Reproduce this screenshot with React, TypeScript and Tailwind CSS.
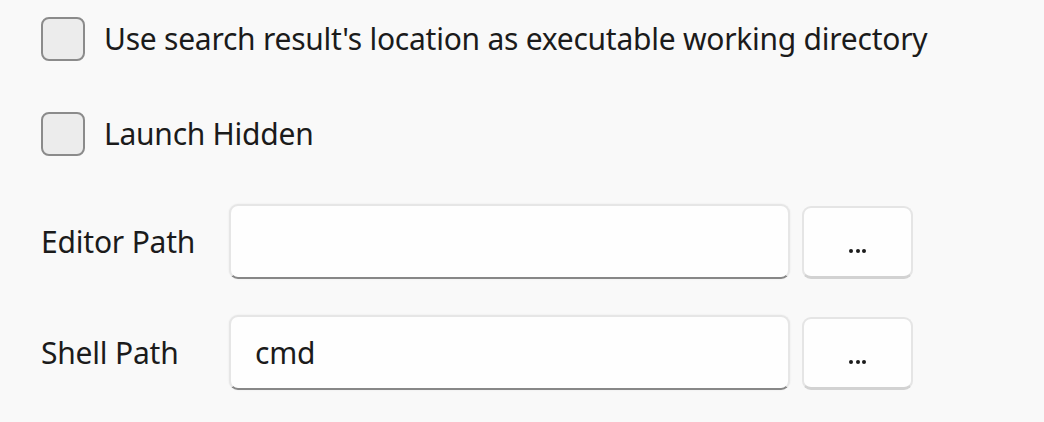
import React from "react";

const font = { fontFamily: '"Noto Sans", "Open Sans", sans-serif' };

function CheckRow({ label, className }: { label: string; className?: string }) {
  return (
    <div className={`flex items-center gap-[19px] h-[44px] ${className ?? ""}`}>
      <div className="w-[44px] h-[44px] shrink-0 rounded-[8px] border-2 border-[#8b8b8b] bg-[#ececec]" />
      <span className="text-[30px] leading-none text-[#1b1b1b] tracking-[-0.25px]">{label}</span>
    </div>
  );
}

function Dots() {
  return (
    <div className="flex gap-[2.5px] mt-[18px]">
      <div className="w-[4px] h-[4px] rounded-full bg-[#1b1b1b]" />
      <div className="w-[4px] h-[4px] rounded-full bg-[#1b1b1b]" />
      <div className="w-[4px] h-[4px] rounded-full bg-[#1b1b1b]" />
    </div>
  );
}

function PathRow({ label, value, className }: { label: string; value: string; className?: string }) {
  return (
    <div className={`flex items-start ${className ?? ""}`}>
      <span className="w-[188px] h-[75px] flex items-center shrink-0 text-[30px] leading-none text-[#1b1b1b] tracking-[-0.2px]">{label}</span>
      <div className="w-[561px] h-[75px] flex items-center pl-[24px] rounded-[9px] bg-[#fefefe] border-2 border-[#e6e6e6] border-b-[#878787] shadow-[0_0_2px_rgba(0,0,0,0.08)] text-[30px] text-[#1b1b1b] tracking-[-0.25px]">
        {value}
      </div>
      <button className="ml-[12px] w-[111px] h-[73px] mt-[2px] flex items-center justify-center rounded-[9px] bg-[#fefefe] border-2 border-[#e5e5e5] border-b-[3px] border-b-[#d2d2d2]">
        <Dots />
      </button>
    </div>
  );
}

export default function App() {
  return (
    <div style={font} className="w-[1044px] h-[422px] bg-[#f9f9f9] pl-[41px] pt-[17px] flex flex-col overflow-hidden">
      <CheckRow label="Use search result's location as executable working directory" />
      <CheckRow label="Launch Hidden" className="mt-[51px]" />
      <PathRow label="Editor Path" value="" className="mt-[48px]" />
      <PathRow label="Shell Path" value="cmd" className="mt-[36px]" />
    </div>
  );
}
